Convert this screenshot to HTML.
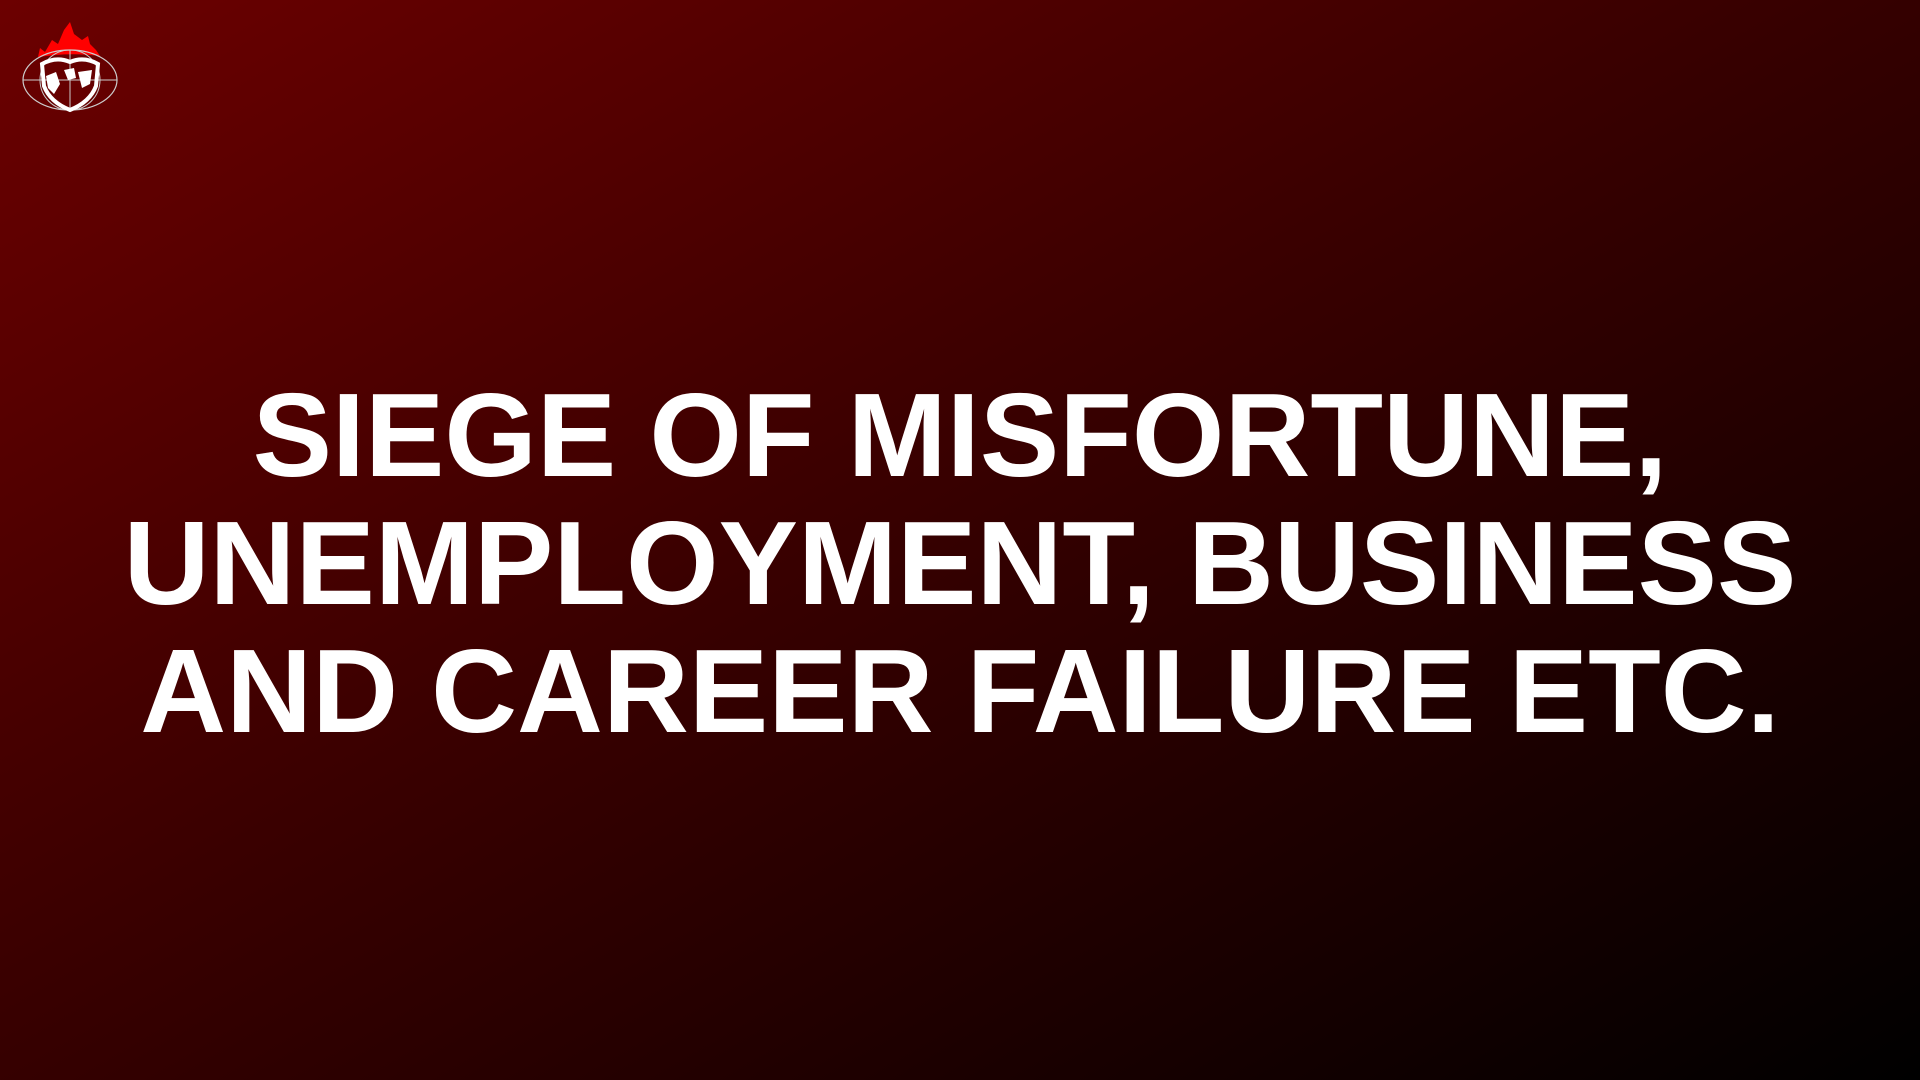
<!DOCTYPE html>
<html><head><style>
html,body{margin:0;padding:0}
body{width:1920px;height:1080px;overflow:hidden;position:relative;background:linear-gradient(150deg,#6c0000 0%,#3a0000 45%,#000 100%);font-family:"Liberation Sans",Arial,sans-serif}
.t{position:absolute;left:0;width:1920px;top:372px;text-align:center;color:#fff;font-weight:bold;font-size:119px;line-height:128px;letter-spacing:0px}
</style></head><body>
<svg style="position:absolute;left:0;top:0" width="140" height="130" viewBox="0 0 140 130">
<path d="M38,57 L40,48 L45,52 L52,40 L58,44 L64,30 L70,22 L74,34 L82,40 L88,36 L90,44 L96,50 L100,56 Q70,52 38,57Z" fill="#f00"/>
<ellipse cx="70" cy="80" rx="47" ry="30" fill="none" stroke="#ccc" stroke-width="1.2"/>
<ellipse cx="70" cy="80" rx="30" ry="30" fill="none" stroke="#ccc" stroke-width="1"/>
<line x1="23" y1="80" x2="117" y2="80" stroke="#ccc"/>
<line x1="70" y1="50" x2="70" y2="110" stroke="#ccc"/>
<path d="M42,64 Q56,56 70,62 Q84,56 98,64 L96,86 Q90,102 70,110 Q50,102 44,86Z" fill="none" stroke="#fff" stroke-width="4"/>
<path d="M46,76 L56,72 L60,84 L54,94 L48,88Z M64,70 L74,68 L76,78 L68,80Z M78,72 L92,70 L90,84 L82,88Z" fill="#fff"/>
</svg>
<div class="t">SIEGE OF MISFORTUNE,<br>UNEMPLOYMENT, BUSINESS<br>AND CAREER FAILURE ETC.</div>
</body></html>
